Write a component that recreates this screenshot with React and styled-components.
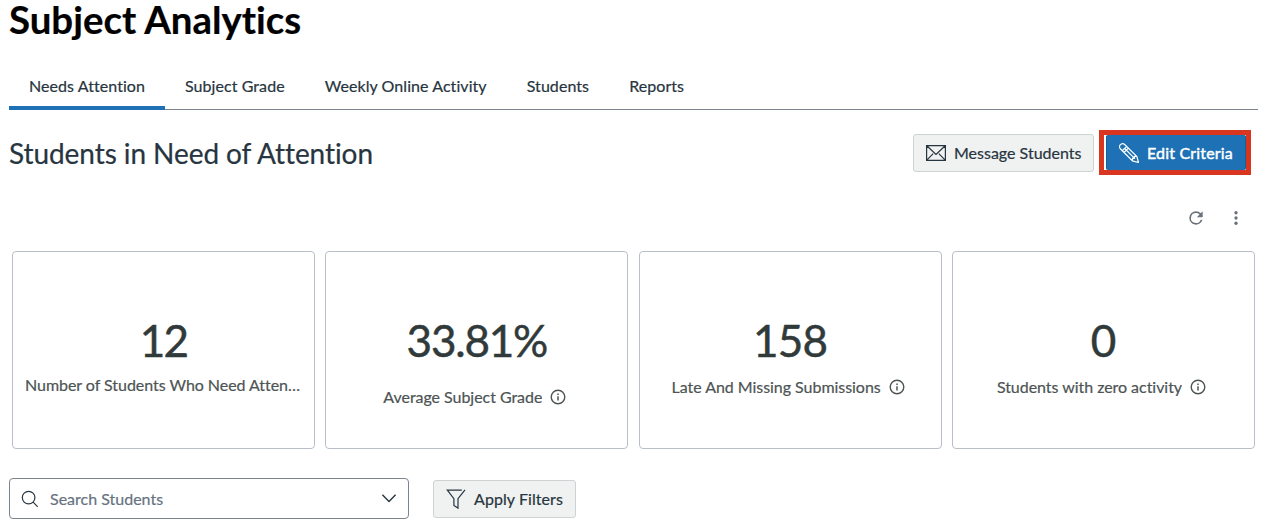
import React from 'react';
import styled, { createGlobalStyle } from 'styled-components';

const GlobalStyle = createGlobalStyle`
  * {
    box-sizing: border-box;
  }

  body {
    margin: 0;
    background: #ffffff;
    color: #273540;
    font-family: Lato, "Liberation Sans", sans-serif;
    font-size: 16px;
    font-variant-ligatures: none;
    -webkit-text-stroke: 0.2px;
    overflow: hidden;
  }
`;

const Page = styled.main`
  height: 529px;
  padding: 0 12px 0 9px;
  overflow: hidden;
`;

const Title = styled.h1`
  margin: 0;
  height: 63px;
  line-height: 39px;
  font-size: 38.4px;
  font-weight: 700;
  color: #000000;
`;

const Tabs = styled.nav`
  display: flex;
  height: 47px;
  border-bottom: 1px solid #7c858d;
`;

const Tab = styled.button`
  height: 47px;
  padding: 2px 20px 0;
  border: 0;
  border-bottom: 4px solid ${({ $active }) => ($active ? '#1d71b4' : 'transparent')};
  background: transparent;
  color: #273540;
  font: inherit;
  line-height: 39px;
  letter-spacing: 0.07px;
  white-space: nowrap;
`;

const Header = styled.header`
  display: flex;
  justify-content: space-between;
  height: 87px;
  padding: 20px 7px 0 0;
`;

const Heading = styled.h2`
  margin: 0;
  line-height: 47px;
  font-size: 28px;
  font-weight: 400;
  letter-spacing: -0.07px;
`;

const Actions = styled.div`
  display: flex;
  align-items: flex-start;
  gap: 5px;
`;

const Button = styled.button`
  display: flex;
  align-items: center;
  gap: 8px;
  flex: none;
  width: ${({ $width }) => $width}px;
  height: 38px;
  padding: 0 0 0 12px;
  border: 1px solid #cdd2d5;
  border-radius: 3px;
  background: #f0f1f1;
  color: #273540;
  font: inherit;
  font-weight: 400;
  letter-spacing: ${({ $tracking }) => $tracking || 0}px;
  white-space: nowrap;
`;

const MessageButton = styled(Button)`
  margin-top: 4px;
  padding-bottom: 1px;
`;

const Highlight = styled.div`
  width: 152px;
  height: 45px;
  padding-left: 2px;
  border: 5px solid #d93621;
`;

const PrimaryButton = styled(Button)`
  height: 35px;
  border-color: #155f9b;
  border-width: 0 1px;
  border-radius: 2px;
  background: #1d71b4;
  color: #ffffff;
  -webkit-text-stroke: 0.45px;
`;

const ChartTools = styled.div`
  display: flex;
  align-items: center;
  justify-content: flex-end;
  gap: 21px;
  height: 42px;
  padding-right: 13px;
  color: #69717a;
`;

const Cards = styled.section`
  display: grid;
  grid-template-columns: repeat(4, 303px);
  justify-content: space-between;
  margin: 12px 3px 29px 3px;
  width: 1243px;
`;

const Card = styled.article`
  height: 198px;
  padding: 60px 12px 0;
  border: 1px solid #b9bfc8;
  border-radius: 4px;
  text-align: center;
`;

const CardValue = styled.div`
  height: 57px;
  line-height: 56px;
  font-size: 44px;
  color: #313a3a;
  letter-spacing: ${({ $tracking }) => $tracking || 0}px;
  -webkit-text-stroke: 0.5px;
`;

const CardLabel = styled.div`
  display: flex;
  align-items: center;
  justify-content: center;
  gap: 8px;
  margin-top: ${({ $offset }) => $offset}px;
  padding-right: ${({ $info }) => ($info ? 4 : 0)}px;
  height: 20px;
  line-height: 20px;
  color: #4d5454;
`;

const LabelText = styled.span`
  overflow: hidden;
  text-overflow: ellipsis;
  white-space: nowrap;
  letter-spacing: -0.04px;
`;

const Filters = styled.div`
  display: flex;
  align-items: center;
  gap: 24px;
`;

const SearchBox = styled.div`
  display: flex;
  align-items: center;
  width: 400px;
  height: 41px;
  padding: 0 11px;
  border: 1px solid #7c858d;
  border-radius: 4px;
`;

const SearchInput = styled.input`
  flex: 1;
  min-width: 0;
  padding: 0 0 0 11px;
  border: 0;
  outline: 0;
  background: transparent;
  font: inherit;

  &::placeholder {
    color: #66737f;
    opacity: 1;
  }
`;

const Icon = styled.svg`
  flex: none;
  fill: none;
  stroke: currentColor;
  stroke-width: 1.2;
`;

const MailIcon = () => (
  <Icon width="20" height="20" viewBox="0 0 20 20">
    <path d="M.6 2.6h18.8v14.8H.6zM.8 2.8 10 11.5l9.2-8.7M.8 17.1l6.4-6.4M19.2 17.1l-6.4-6.4" />
  </Icon>
);

const PencilIcon = () => (
  <Icon width="20" height="20" viewBox="0 0 20 20">
    <path d="M1.1 5.5C.3 4.3.4 2.7 1.4 1.7S4.2.4 5.4 1.2L17.9 13.5l1.6 6-6-1.6ZM3.3 7.7 7.7 3.4M5.1 9.4l4.3-4.3M5.7 5.5l9.8 9.8M13.3 17.5l.3-2.2 1.9.1-.1-1.9 2.2-.3" />
  </Icon>
);

const FilterIcon = () => (
  <Icon width="20" height="20" viewBox="0 0 20 20">
    <path d="M15.8 1.1H1.3l6.6 8.6v6.7l4.1 2.7V9.7L19 .8" />
  </Icon>
);

const SearchIcon = () => (
  <Icon width="18" height="18" viewBox="0 0 18 18">
    <circle cx="7.6" cy="7.6" r="6.3" />
    <path d="m12.1 12.1 4.7 4.7" />
  </Icon>
);

const ChevronIcon = () => (
  <Icon width="16" height="16" viewBox="0 0 16 16">
    <path d="m1.4 3.8 6.6 6.6 6.6-6.6" strokeWidth="1.4" />
  </Icon>
);

const RefreshIcon = () => (
  <svg width="20" height="20" viewBox="0 0 24 24" fill="currentColor">
    <path d="M17.65 6.35A7.96 7.96 0 0 0 12 4a8 8 0 1 0 7.73 10h-2.08A6 6 0 1 1 12 6c1.66 0 3.14.69 4.22 1.78L13 11h7V4z" />
  </svg>
);

const MoreIcon = () => (
  <svg width="18" height="18" viewBox="0 0 24 24" fill="currentColor">
    <circle cx="12" cy="5" r="2.2" />
    <circle cx="12" cy="12" r="2.2" />
    <circle cx="12" cy="19" r="2.2" />
  </svg>
);

const InfoIcon = () => (
  <Icon width="16" height="16" viewBox="0 0 16 16">
    <circle cx="8" cy="8" r="6.8" strokeWidth="1.4" />
    <path d="M8 7.2v4.2M8 4.4v1.5" strokeWidth="1.5" />
  </Icon>
);

const tabs = [
  'Needs Attention',
  'Subject Grade',
  'Weekly Online Activity',
  'Students',
  'Reports',
];

const stats = [
  { value: '12', label: 'Number of Students Who Need Attention', offset: 6, tracking: -1.8 },
  { value: '33.81%', label: 'Average Subject Grade', offset: 18, tracking: -1.2, info: true },
  { value: '158', label: 'Late And Missing Submissions', offset: 8, tracking: -0.7, info: true },
  { value: '0', label: 'Students with zero activity', offset: 8, info: true },
];

const App = () => (
  <>
    <GlobalStyle />
    <Page>
      <Title>Subject Analytics</Title>
      <Tabs>
        {tabs.map((tab, i) => (
          <Tab key={tab} $active={i === 0}>{tab}</Tab>
        ))}
      </Tabs>
      <Header>
        <Heading>Students in Need of Attention</Heading>
        <Actions>
          <MessageButton $width={181}>
            <MailIcon />
            Message Students
          </MessageButton>
          <Highlight>
            <PrimaryButton $width={140} $tracking={0.18}>
              <PencilIcon />
              Edit Criteria
            </PrimaryButton>
          </Highlight>
        </Actions>
      </Header>
      <ChartTools>
        <RefreshIcon />
        <MoreIcon />
      </ChartTools>
      <Cards>
        {stats.map(({ value, label, offset, tracking, info }) => (
          <Card key={label}>
            <CardValue $tracking={tracking}>{value}</CardValue>
            <CardLabel $offset={offset} $info={info}>
              <LabelText>{label}</LabelText>
              {info && <InfoIcon />}
            </CardLabel>
          </Card>
        ))}
      </Cards>
      <Filters>
        <SearchBox>
          <SearchIcon />
          <SearchInput placeholder="Search Students" />
          <ChevronIcon />
        </SearchBox>
        <Button $width={143} $tracking={0.08}>
          <FilterIcon />
          Apply Filters
        </Button>
      </Filters>
    </Page>
  </>
);

export default App;
